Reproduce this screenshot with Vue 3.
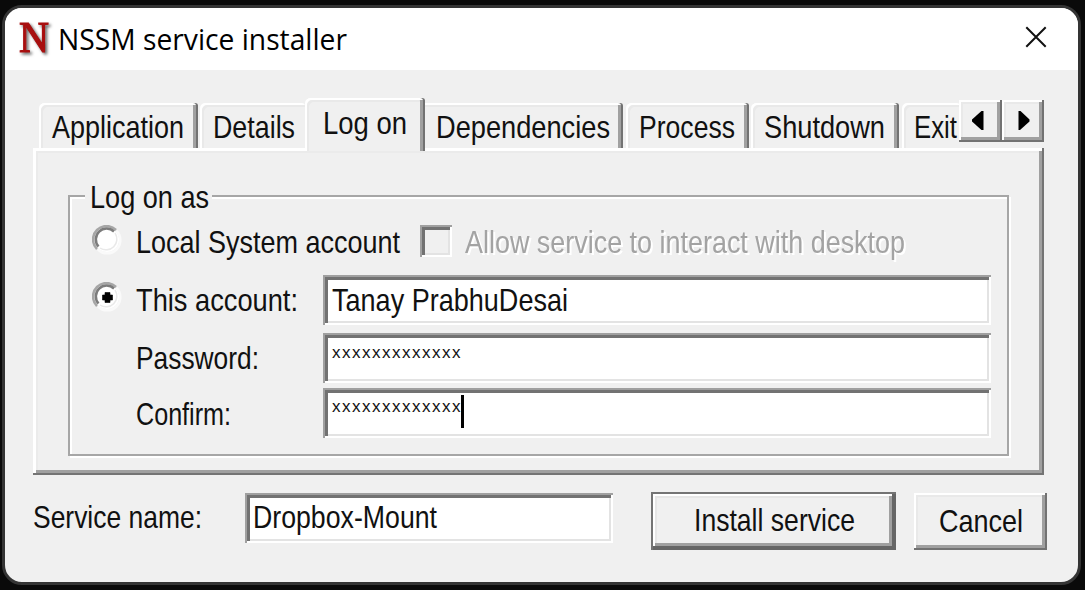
<script setup>
import { h } from 'vue'

// Text fitted to a given advance width, as in the narrow bitmap dialog font.
const Label = ({ text, w }) =>
  h('svg', { class: 'label', width: w, height: 32 }, [
    h('text', { x: 0, y: 26, textLength: w, lengthAdjust: 'spacingAndGlyphs' }, text),
  ])
Label.props = ['text', 'w']

const tabs = [
  { name: 'Application', w: 132, cls: 'application' },
  { name: 'Details', w: 82, cls: 'details' },
  { name: 'Log on', w: 84, cls: 'selected' },
  { name: 'Dependencies', w: 174, cls: 'dependencies' },
  { name: 'Process', w: 96, cls: 'process' },
  { name: 'Shutdown', w: 121, cls: 'shutdown' },
  { name: 'Exit', w: 43, cls: 'exit' },
]
const mask = 'x'.repeat(13)
</script>

<template>
  <div class="desktop">
    <div class="window">
      <header class="titlebar">
        <svg class="logo" width="36" height="38" viewBox="0 0 36 38">
          <text x="3" y="33.5" textLength="30" lengthAdjust="spacingAndGlyphs">N</text>
        </svg>
        <svg class="title" width="290" height="40">
          <text x="0" y="30" textLength="289" lengthAdjust="spacingAndGlyphs">NSSM service installer</text>
        </svg>
        <svg class="close" width="22" height="22" viewBox="0 0 22 22">
          <path d="M1.3 1.3 20.7 20.7M20.7 1.3 1.3 20.7" />
        </svg>
      </header>

      <nav class="tabs">
        <div v-for="t in tabs" :key="t.name" class="tab" :class="t.cls">
          <Label :text="t.name" :w="t.w" />
        </div>
        <div class="scroll">
          <button class="raised"><svg width="12" height="20"><path d="M11.500 0v19h-2L0 10.500V8.500L9.500 0z" /></svg></button>
          <button class="raised right"><svg width="12" height="20"><path d="M.5 0v19h1.500L11.500 10.500V8.500L2.500 0z" /></svg></button>
        </div>
      </nav>

      <main class="panel">
        <section class="group">
          <div class="legend"><Label text="Log on as" :w="119" /></div>
          <div class="row first">
            <svg class="radio" width="30" height="30" viewBox="0 0 30 30">
              <circle cx="15" cy="15" r="12" fill="#fff" />
              <path d="M24.500 6A13 13 0 0 1 6 24.500" stroke="#fafafa" />
              <path d="M23 8A10.800 10.800 0 0 1 8 23" stroke="#e9e9e9" stroke-width="1.500" />
              <path d="M5 24A13 13 0 0 1 24 5" stroke="#a6a6a6" />
              <path d="M6.500 21.500A10.800 10.800 0 0 1 22 6.500" stroke="#7c7c7c" />
            </svg>
            <Label text="Local System account" :w="264" />
            <div class="sunken checkbox"></div>
            <Label class="disabled" text="Allow service to interact with desktop" :w="440" />
          </div>
          <div class="row">
            <svg class="radio" width="30" height="30" viewBox="0 0 30 30">
              <circle cx="15" cy="15" r="12" fill="#fff" />
              <path d="M24.500 6A13 13 0 0 1 6 24.500" stroke="#fafafa" />
              <path d="M23 8A10.800 10.800 0 0 1 8 23" stroke="#e9e9e9" stroke-width="1.500" />
              <path d="M5 24A13 13 0 0 1 24 5" stroke="#a6a6a6" />
              <path d="M6.500 21.500A10.800 10.800 0 0 1 22 6.500" stroke="#7c7c7c" />
              <path d="M13 10.500h5v2.500h2.500v5H18v2.500h-5V18h-2.500v-5H13z" fill="#000" stroke="#000" stroke-width=".6" stroke-linejoin="round" />
            </svg>
            <Label class="name" text="This account:" :w="162" />
            <div class="sunken field"><Label text="Tanay PrabhuDesai" :w="236" /></div>
          </div>
          <div class="row second">
            <Label class="name indent" text="Password:" :w="123" />
            <div class="sunken field"><span class="mask">{{ mask }}</span></div>
          </div>
          <div class="row third">
            <Label class="name indent" text="Confirm:" :w="95" />
            <div class="sunken field"><span class="mask">{{ mask }}</span><i class="caret"></i></div>
          </div>
        </section>
      </main>

      <footer class="footer">
        <Label class="service" text="Service name:" :w="169" />
        <div class="sunken service-field"><Label text="Dropbox-Mount" :w="184" /></div>
        <button class="install"><Label text="Install service" :w="161" /></button>
        <button class="raised cancel"><Label text="Cancel" :w="84" /></button>
      </footer>
    </div>
  </div>
</template>

<style scoped>
.desktop {
  width: 1085px;
  height: 590px;
  box-sizing: border-box;
  padding: 5px 4px 5px 2px;
  background: #0a0a0a;
  overflow: hidden;
}
.window {
  box-sizing: border-box;
  height: 580px;
  border: 3px solid #343434;
  border-radius: 20px;
  background: #f0f0f0;
  overflow: hidden;
  font: 32px "Liberation Sans", sans-serif;
  color: #111;
}
button {
  border: 0;
  padding: 0;
  background: #f0f0f0;
  font: inherit;
  color: inherit;
  display: flex;
  align-items: center;
  justify-content: center;
}
.label {
  display: block;
  flex: none;
  overflow: visible;
  fill: #111;
}
.titlebar {
  height: 62px;
  background: #fff;
  display: flex;
  align-items: flex-start;
}
.logo {
  margin: 10px 0 0 11px;
  font: 45px "Liberation Serif", serif;
  fill: #a80f0f;
  stroke: #a80f0f;
  stroke-width: 1.2;
  filter: drop-shadow(2px 2px 1.5px #0009);
  overflow: visible;
}
.title {
  margin: 12px 0 0 6px;
  font: 29px "Open Sans", sans-serif;
  fill: #000;
  overflow: visible;
}
.close {
  margin: 18px 31px 0 auto;
  fill: none;
  stroke: #111;
  stroke-width: 2;
}
.raised {
  box-shadow: inset -2px -2px #727272, inset 2px 2px #fff, inset -5px -5px #a0a0a0, inset 4px 4px #e9e9e9;
}
.sunken {
  box-sizing: border-box;
  background: #fff;
  box-shadow: inset 2px 2px #a0a0a0, inset -2px -2px #fff, inset 5px 5px #727272, inset -4px -4px #e3e3e3;
}
.tabs {
  display: flex;
  align-items: flex-end;
  height: 50px;
  margin: 28px 0 0 34px;
}
.tab {
  box-sizing: border-box;
  flex: none;
  height: 45px;
  padding: 9px 0 0 13px;
  border-radius: 5px 3px 0 0;
  background: #f0f0f0;
  box-shadow: inset -2px 0 #727272, inset 2px 2px #fff, inset -5px 0 #a0a0a0, inset 4px 4px #e9e9e9;
}
.application { width: 159px; margin-right: 2px; }
.details { width: 105px; padding-left: 12px; box-shadow: inset 2px 2px #fff, inset 4px 4px #e9e9e9; }
.selected {
  position: relative;
  z-index: 1;
  width: 120px;
  height: 53px;
  margin-bottom: -3px;
  padding: 9px 0 0 17px;
}
.dependencies { width: 198px; padding-left: 10px; margin-right: 3px; box-shadow: inset -2px 0 #727272, inset 0 2px #fff, inset -5px 0 #a0a0a0, inset 0 4px #e9e9e9; border-top-left-radius: 0; }
.process { width: 123px; margin-right: 2px; }
.shutdown { width: 148px; margin-right: 3px; }
.exit { width: 58px; padding-left: 12px; box-shadow: inset 2px 2px #fff, inset 4px 4px #e9e9e9; }
.selected .label { margin-top: 1px; }
.selected .label, .details .label, .dependencies .label { margin-left: 1px; }
.scroll {
  position: relative;
  z-index: 2;
  display: flex;
  align-self: flex-start;
  margin: 2px 0 0 -1px;
}
.scroll button { width: 43px; height: 42px; padding: 0 6px 0 0; }
.scroll .right { width: 42px; padding: 0 0 0 2px; }
.panel {
  box-sizing: border-box;
  width: 1011px;
  height: 327px;
  margin-left: 28px;
  padding: 47px 0 0 35px;
  box-shadow: inset -2px -2px #747474, inset 3px 3px #fff, inset -5px -5px #a0a0a0, inset 5px 5px #ebebeb;
}
.group {
  box-sizing: border-box;
  width: 941px;
  height: 261px;
  border: 2px solid #a6a6a6;
  box-shadow: 2px 2px #fff, inset 2px 2px #fff;
}
.legend {
  box-sizing: border-box;
  width: 127px;
  height: 32px;
  margin: -15px 0 8px 15px;
  padding-left: 5px;
  background: #f0f0f0;
}
.row {
  display: flex;
  align-items: flex-start;
  height: 58px;
  padding-left: 22px;
}
.row > .label { margin-top: 10px; }
.row.first { height: 53px; }
.row.first > .label { margin-top: 5px; }
.row.second { height: 55px; }
.row.third > .label { margin-top: 11px; }
.radio { flex: none; margin: 7px 14px 0 0; fill: none; stroke-width: 2.5; }
.first .radio { margin-top: 3px; }
.indent { margin-left: 44px; }
.field {
  display: flex;
  width: 668px;
  height: 50px;
  margin: 0 16px 0 auto;
  padding: 10px 0 0 9px;
}
.mask {
  font: 17px/20px "Liberation Sans", sans-serif;
  letter-spacing: 1.5px;
}
.third .mask { margin-top: -1px; }
.caret { width: 3px; height: 33px; margin: -3px 0 0 -1px; background: #000; }
.checkbox { width: 32px; height: 32px; margin: 3px 13px 0 20px; background: #f0f0f0; }
.label.disabled { fill: #a3a3a3; filter: drop-shadow(2px 2px 0 #fff); }
.footer {
  display: flex;
  align-items: flex-start;
  margin-top: 18px;
}
.service { margin: 9px 0 0 28px; }
.service-field { width: 368px; height: 50px; margin-left: 43px; padding: 9px 0 0 8px; }
.install {
  width: 245px;
  height: 58px;
  margin: -1px 18px 0 38px;
  box-shadow: inset 2px 2px #747474, inset -4px -4px #666, inset 4px 4px #fff, inset -7px -7px #a0a0a0, inset 6px 6px #e6e6e6;
}
.install .label { margin-left: 2px; }
.cancel { width: 133px; height: 57px; }
</style>

<style>
html, body { margin: 0; background: #0a0a0a; }
</style>
